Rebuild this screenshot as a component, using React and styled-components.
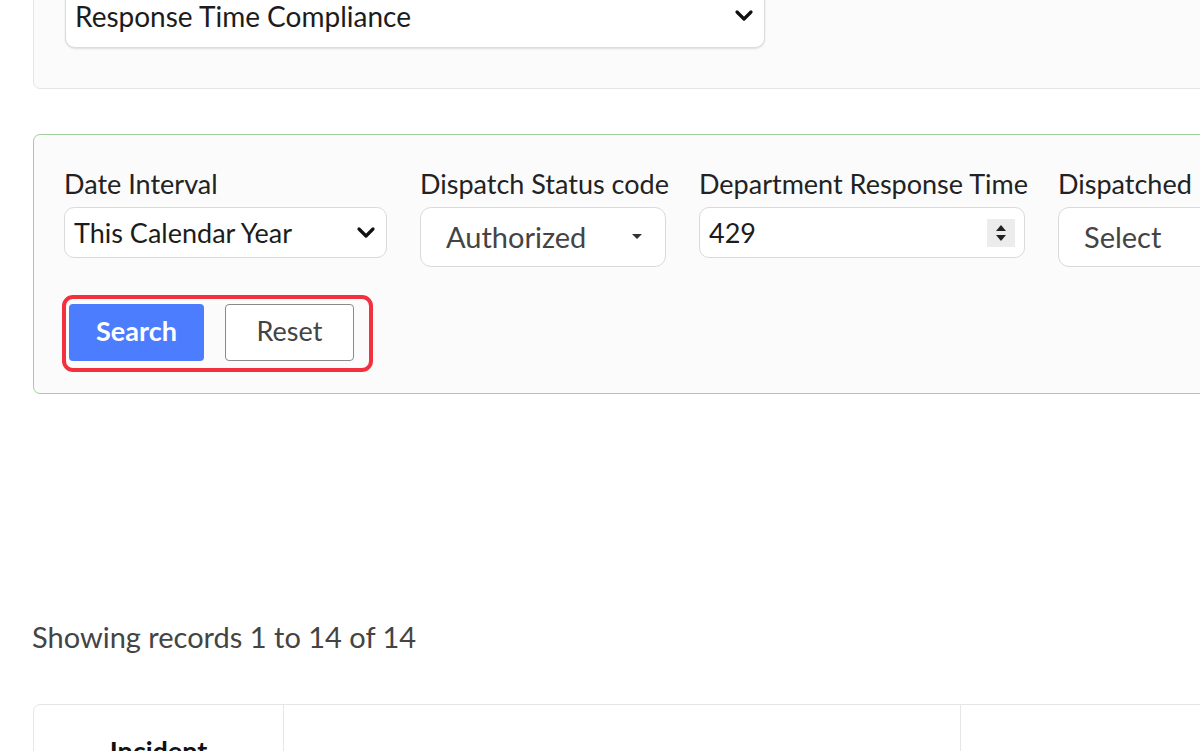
import React from 'react'
import styled, { createGlobalStyle } from 'styled-components';

const GlobalStyle = createGlobalStyle`
    html, body {
        margin: 0;
        padding: 0;
        background: #ffffff;
        font-family: Lato, "Open Sans", sans-serif;
        color: #222;
        overflow: hidden;
    }
`;

const Page = styled.div`
    width: 1200px;
    height: 751px;
    overflow: hidden;
`;

const Scroller = styled.div`
    margin-top: -47px;
    padding-left: 33px;
`;

const TopPanel = styled.div`
    background: #fbfbfb;
    border: 1.5px solid #e6e6e6;
    border-radius: 7px;
    padding: 30px 0 40px 31px;
    margin-right: -40px;
`;

const ReportSelect = styled.div`
    width: 700px;
    height: 64px;
    box-sizing: border-box;
    display: flex;
    align-items: center;
    justify-content: space-between;
    padding: 0 10px 0 9px;
    background: #fff;
    border: 1.5px solid #dcdcdc;
    border-radius: 10px;
    box-shadow: 0 1px 2px rgba(0,0,0,0.12);
    font-size: 28px;
    line-height: 34px;
    color: #1c1c1c;
`;

const FilterPanel = styled.div`
    margin-top: 45px;
    margin-right: -40px;
    background: #fbfbfb;
    border: 1.5px solid #9fcf9c;
    border-radius: 7px;
    padding: 34px 0 21px 30px;
`;

const FieldRow = styled.div`
    display: flex;
    gap: 33px;
    align-items: flex-start;
`;

const Field = styled.div`
    display: flex;
    flex-direction: column;
    width: ${p => p.$width}px;
    flex-shrink: 0;
`;

const Label = styled.div`
    font-size: 27px;
    line-height: 30px;
    color: #222;
    white-space: nowrap;
    margin-bottom: 8px;
`;

const Control = styled.div`
    height: ${p => p.$tall ? 60 : 51}px;
    box-sizing: border-box;
    display: flex;
    align-items: center;
    justify-content: space-between;
    padding: 0 ${p => p.$tall ? 22 : 10}px 0 ${p => p.$tall ? 25 : 9}px;
    background: #fff;
    border: 1.5px solid #dadada;
    border-radius: ${p => p.$tall ? 11 : 10}px;
    font-size: ${p => p.$tall ? 29 : 27}px;
    line-height: 34px;
    color: ${p => p.$tall ? '#444' : '#1c1c1c'};
    white-space: nowrap;
`;

const Spinner = styled.div`
    width: 28px;
    height: 28px;
    background: #ececec;
    display: flex;
    align-items: center;
    justify-content: center;
    margin-right: -1px;
`;

const Highlight = styled.div`
    display: inline-flex;
    align-items: center;
    gap: 21px;
    margin-top: 28px;
    margin-left: -2px;
    padding: 5px 15px 7px 3px;
    border: 4px solid #f2313f;
    border-radius: 11px;
`;

const Button = styled.button`
    height: 57px;
    width: ${p => p.$primary ? 135 : 129}px;
    box-sizing: border-box;
    font-family: Lato, "Open Sans", sans-serif;
    font-size: 27px;
    line-height: 30px;
    font-weight: ${p => p.$primary ? 700 : 400};
    color: ${p => p.$primary ? '#fff' : '#444'};
    background: ${p => p.$primary ? '#4b7dfe' : '#fff'};
    border: ${p => p.$primary ? 'none' : '1.5px solid #8a8a8a'};
    border-radius: 4px;
    cursor: pointer;
    padding: 0 0 3px 0;
`;

const Records = styled.div`
    margin-top: 225px;
    margin-left: -1px;
    font-size: 29px;
    line-height: 36px;
    color: #444;
`;

const Table = styled.div`
    margin-top: 49px;
    margin-right: -40px;
    display: grid;
    grid-template-columns: 249px 677px 1fr;
    border: 1.5px solid #e6e6e6;
    border-radius: 7px;
    height: 120px;
`;

const HeadCell = styled.div`
    border-left: ${p => p.$first ? 'none' : '1.5px solid #e6e6e6'};
    text-align: center;
    padding-top: 29px;
    font-size: 27px;
    font-weight: 700;
    color: #111;
`;

const Chevron = () => (
    <svg width="20" height="14" viewBox="0 0 20 14">
        <polyline points="3,3 10,10 17,3" fill="none" stroke="#111" strokeWidth="3.2" strokeLinecap="round" strokeLinejoin="round" />
    </svg>
);

const Caret = () => (
    <svg width="12" height="8" viewBox="0 0 12 8">
        <polygon points="1,1 11,1 6,6" fill="#333" />
    </svg>
);

const SpinArrows = () => (
    <svg width="12" height="20" viewBox="0 0 12 20">
        <polygon points="6,2 11,8 1,8" fill="#222" />
        <polygon points="1,12 11,12 6,18" fill="#222" />
    </svg>
);

const App = () => {
  return (
        <Page>
            <GlobalStyle />
            <Scroller>
                <TopPanel>
                    <ReportSelect>
                        <span>Response Time Compliance</span>
                        <Chevron />
                    </ReportSelect>
                </TopPanel>
                <FilterPanel>
                    <FieldRow>
                        <Field $width={323}>
                            <Label>Date Interval</Label>
                            <Control>
                                <span>This Calendar Year</span>
                                <Chevron />
                            </Control>
                        </Field>
                        <Field $width={246}>
                            <Label>Dispatch Status code</Label>
                            <Control $tall>
                                <span>Authorized</span>
                                <Caret />
                            </Control>
                        </Field>
                        <Field $width={326}>
                            <Label>Department Response Time</Label>
                            <Control>
                                <span>429</span>
                                <Spinner><SpinArrows /></Spinner>
                            </Control>
                        </Field>
                        <Field $width={300}>
                            <Label>Dispatched Incidents</Label>
                            <Control $tall>
                                <span>Select</span>
                                <Caret />
                            </Control>
                        </Field>
                    </FieldRow>
                    <Highlight>
                        <Button $primary>Search</Button>
                        <Button>Reset</Button>
                    </Highlight>
                </FilterPanel>
                <Records>Showing records 1 to 14 of 14</Records>
                <Table>
                    <HeadCell $first>Incident</HeadCell>
                    <HeadCell />
                    <HeadCell />
                </Table>
            </Scroller>
        </Page>
  )
}

export default App
